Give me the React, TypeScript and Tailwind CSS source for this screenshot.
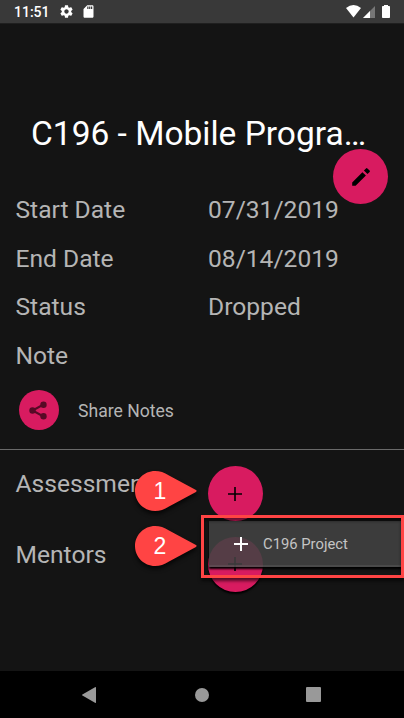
import React from "react";

type PinProps = { label: string; className: string };

function Pin({ label, className }: PinProps) {
  return (
    <div className={`absolute h-10 w-[62px] ${className}`}>
      <svg
        viewBox="0 0 62 40"
        className="absolute inset-0 h-full w-full overflow-visible drop-shadow-[0_3px_2px_rgba(0,0,0,0.7)]"
      >
        <path
          d="M20 0C9 0 0 9 0 20S9 40 20 40C25 40 29 38.6 34 35.5L60.5 21.2Q62.8 20 60.5 18.8L34 4.5C29 1.4 25 0 20 0Z"
          fill="#ff4444"
        />
      </svg>
      <span className="absolute left-[13px] top-0 w-6 text-center font-['Liberation_Sans',sans-serif] text-[23px] leading-[41px] text-white">
        {label}
      </span>
    </div>
  );
}

function Plus({ className }: { className: string }) {
  return (
    <svg viewBox="0 0 24 24" className={className} fill="none" stroke="currentColor">
      <path d="M12 5v14M5 12h14" />
    </svg>
  );
}

function Row({ label, value }: { label: string; value?: string }) {
  return (
    <div className="flex h-[48.5px] items-center text-[24.6px] text-[#b5b5b5]">
      <span className="w-[192.5px]">{label}</span>
      <span>{value}</span>
    </div>
  );
}

export default function App() {
  return (
    <div className="relative flex h-[718px] w-[404px] flex-col overflow-hidden bg-[#141414] font-[Roboto,sans-serif]">
      <header className="flex h-[24px] shrink-0 items-center justify-between border-b border-[#1f1f1f] bg-[#393939] pl-[14px] pr-[14px] text-white">
        <div className="flex items-center">
          <span className="w-[45px] pt-px text-[14px] font-medium leading-6">11:51</span>
          <svg viewBox="0 0 24 24" className="h-[15px] w-[15px]" fill="currentColor">
            <path d="M19.43 12.98c.04-.32.07-.64.07-.98s-.03-.66-.07-.98l2.11-1.65c.19-.15.24-.42.12-.64l-2-3.46c-.12-.22-.39-.3-.61-.22l-2.49 1c-.52-.4-1.08-.73-1.69-.98l-.38-2.65A.488.488 0 0 0 14 2h-4c-.25 0-.46.18-.49.42l-.38 2.65c-.61.25-1.17.59-1.69.98l-2.49-1c-.23-.09-.49 0-.61.22l-2 3.46c-.13.22-.07.49.12.64l2.11 1.65c-.04.32-.07.65-.07.98s.03.66.07.98l-2.11 1.65c-.19.15-.24.42-.12.64l2 3.46c.12.22.39.3.61.22l2.49-1c.52.4 1.08.73 1.69.98l.38 2.65c.03.24.24.42.49.42h4c.25 0 .46-.18.49-.42l.38-2.65c.61-.25 1.17-.59 1.69-.98l2.49 1c.23.09.49 0 .61-.22l2-3.46c.12-.22.07-.49-.12-.64l-2.11-1.65zM12 15.5c-1.93 0-3.5-1.57-3.5-3.5s1.57-3.5 3.5-3.5 3.5 1.57 3.5 3.5-1.57 3.5-3.5 3.5z" />
          </svg>
          <svg viewBox="0 0 24 24" className="ml-[6.5px] h-[15px] w-[15px]" fill="currentColor">
            <path d="M18 2h-8L4.02 8 4 20c0 1.1.9 2 2 2h12c1.1 0 2-.9 2-2V4c0-1.1-.9-2-2-2zm-6 6h-2V4h2v4zm3 0h-2V4h2v4zm3 0h-2V4h2v4z" />
          </svg>
        </div>
        <div className="flex items-center">
          <svg viewBox="0 0 15 13" className="h-[13px] w-[15px]" fill="currentColor">
            <path d="M0 3Q7.5-3 15 3L7.5 12.5z" />
          </svg>
          <svg viewBox="0 0 12 12" className="ml-[2.5px] h-3 w-3">
            <path d="M0 12L12 0v12z" fill="#777" />
            <path d="M0 12L7 5v7z" fill="#fff" />
          </svg>
          <svg viewBox="0 0 8 13" className="ml-[7px] h-[13px] w-2" fill="currentColor">
            <path d="M2 1V0h4v1h1.2q.8 0 .8.8v10.4q0 .8-.8.8H.8q-.8 0-.8-.8V1.8Q0 1 .8 1z" />
          </svg>
        </div>
      </header>

      <main className="relative flex flex-1 flex-col">
        <h1 className="mt-[89px] h-[42px] truncate pl-[31px] pr-[30px] text-[33.5px] font-normal leading-[42px] text-white">
          C196 - Mobile Progra…
        </h1>
        <button className="absolute left-[333px] top-[125px] flex h-[55px] w-[55px] items-center justify-center rounded-full bg-[#d81b60] text-black">
          <svg viewBox="0 0 24 24" className="h-6 w-6" fill="currentColor">
            <path d="M3.200 17.400V20.800h3.400L16.900 10.600l-3.500-3.400L3.200 17.400zM20.600 7a1 1 0 0 0 0-1.400l-2.200-2.200a1 1 0 0 0-1.400 0l-2.100 2.100 3.600 3.600 2.100-2.100z" />
          </svg>
        </button>

        <section className="mt-[31.5px] pl-[15.5px]">
          <Row label="Start Date" value="07/31/2019" />
          <Row label="End Date" value="08/14/2019" />
          <Row label="Status" value="Dropped" />
          <Row label="Note" />
        </section>

        <div className="flex h-[69.5px] items-center border-b border-[#6a6a6a] pb-[9px] pl-[19px]">
          <button className="flex h-10 w-10 items-center justify-center rounded-full bg-[#d81b60] text-[#560a26]">
            <svg
              viewBox="0 0 18 19"
              className="mr-[3px] h-[19px] w-[18px]"
              fill="currentColor"
              stroke="currentColor"
            >
              <path d="M14.500 3.500L3.500 9.500L14.500 15.500" fill="none" strokeWidth="2" />
              <circle cx="3.500" cy="9.500" r="3.200" stroke="none" />
              <circle cx="14.500" cy="3.700" r="3.200" stroke="none" />
              <circle cx="14.500" cy="15.300" r="3.200" stroke="none" />
            </svg>
          </button>
          <span className="ml-[19px] pt-px text-[17.6px] text-[#b5b5b5]">Share Notes</span>
        </div>

        <section className="flex flex-col gap-[15.5px] pl-[15.5px] pt-4 text-[24.6px] text-[#b5b5b5]">
          <div className="flex h-[55px]">
            <span className="w-[192.5px] pt-[3px] leading-[29px]">Assessments</span>
            <button className="flex h-[55px] w-[55px] items-center justify-center rounded-full bg-[#d81b60] text-black">
              <Plus className="mr-px h-6 w-6 stroke-[1.6]" />
            </button>
          </div>
          <div className="flex h-[55px]">
            <span className="w-[192.5px] pt-[3px] leading-[29px]">Mentors</span>
            <button className="flex h-[55px] w-[55px] items-center justify-center rounded-full bg-[#d81b60] text-black shadow-[0_2px_2px_#000]">
              <Plus className="mr-px h-6 w-6 stroke-[1.6]" />
            </button>
          </div>
        </section>
      </main>

      <nav className="flex h-[47px] shrink-0 items-center bg-black pl-[82px] text-[#999]">
        <svg viewBox="0 0 14 16" className="h-4 w-[14px]" fill="currentColor">
          <path d="M13 .3q1-.6 1 .5v14.4q0 1.100-1 .5L.4 8.500q-.8-.5 0-1z" />
        </svg>
        <span className="ml-[98.5px] h-[14px] w-[14px] rounded-full bg-[#999]" />
        <span className="ml-[97.5px] h-[15px] w-[15px] rounded-[1px] bg-[#999]" />
      </nav>

      <div className="absolute left-[209px] top-[521px] flex h-[46px] w-[195px] items-center border-b-2 border-[#505050]/90 bg-[#424242]/88 bg-clip-padding pl-[20px] text-[#c4c4c4] shadow-[0_2px_2px_#000]">
        <Plus className="mt-[2px] h-6 w-6 stroke-2 text-white" />
        <span className="ml-[10px] pt-[3px] text-[14.8px]">C196 Project</span>
      </div>
      <div className="absolute left-[201px] top-[515px] h-[63px] w-[203px] border-3 border-[#ff4444] shadow-[0_3px_3px_rgba(0,0,0,0.6),inset_0_3px_3px_rgba(0,0,0,0.5)]" />
      <Pin label="1" className="left-[135px] top-[471px]" />
      <Pin label="2" className="left-[135px] top-[526px]" />
    </div>
  );
}
